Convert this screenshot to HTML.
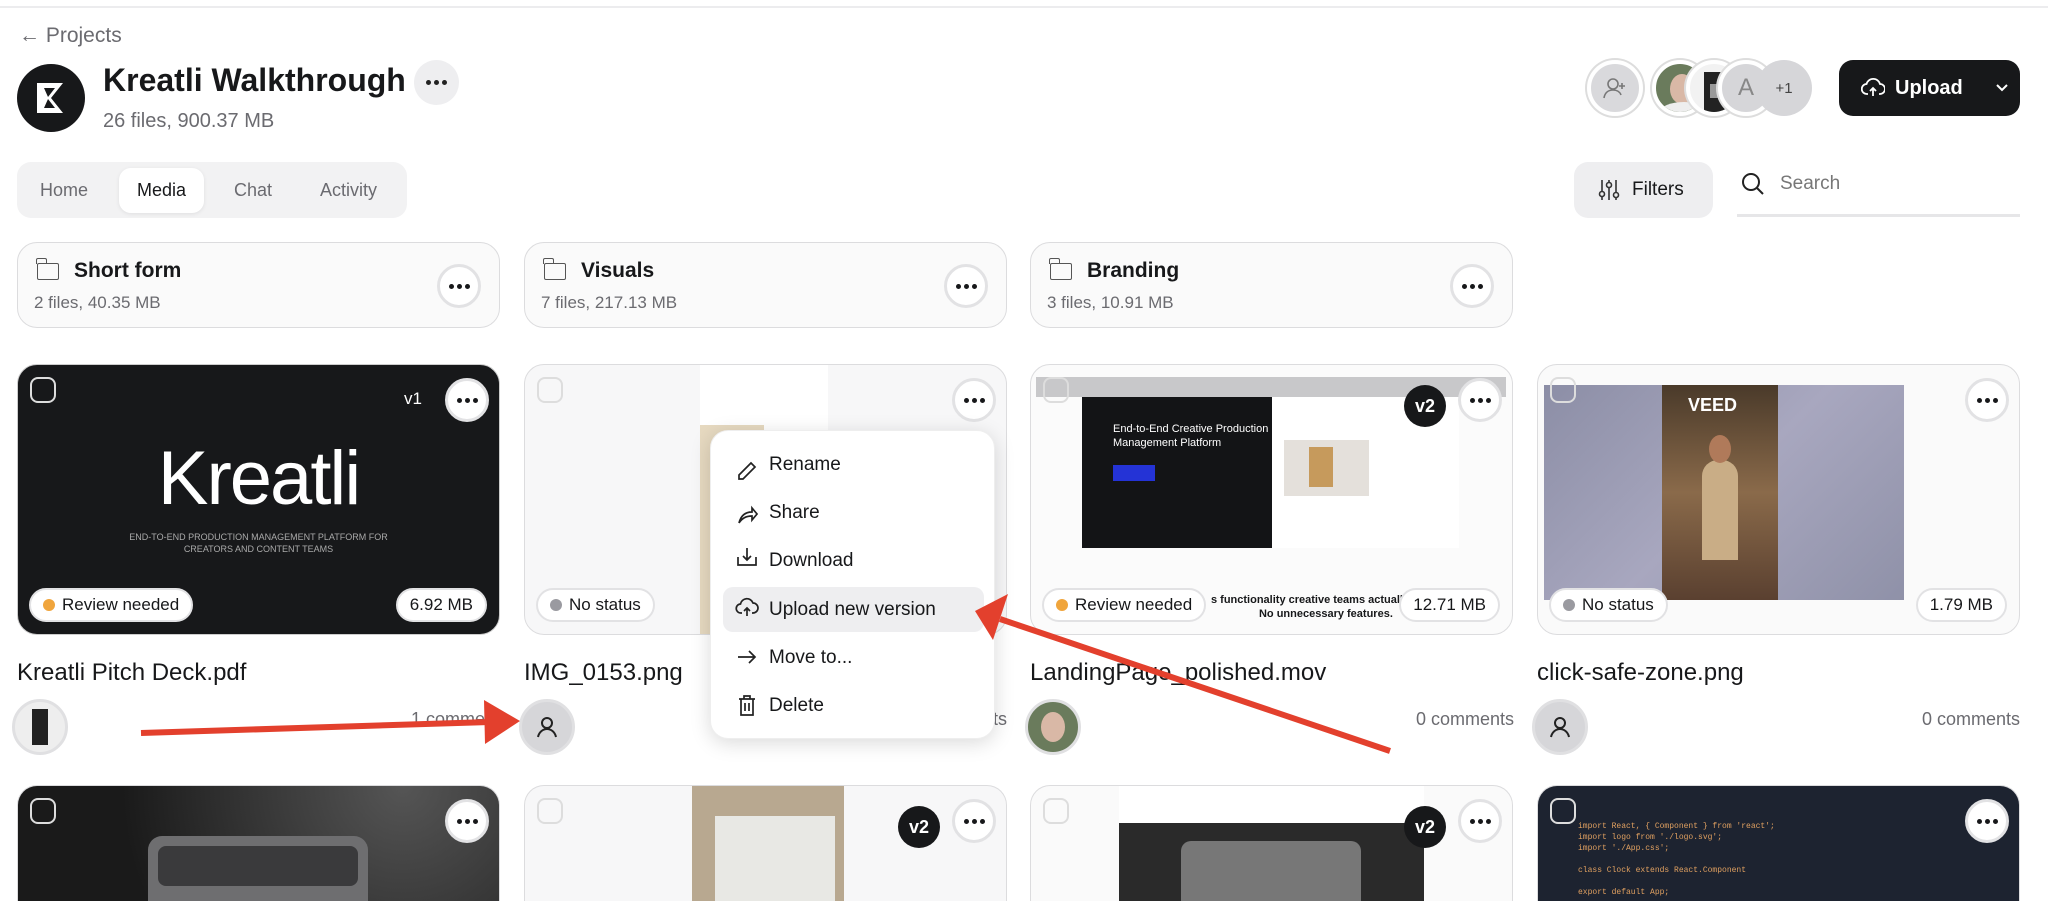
<!DOCTYPE html>
<html><head><meta charset="utf-8"><style>
*{box-sizing:border-box;margin:0;padding:0}
html{width:2048px;height:901px;overflow:hidden}
body{width:2048px;height:901px;overflow:hidden;background:#fff;font-family:"Liberation Sans",sans-serif;color:#17181a;position:relative}
.a{position:absolute}
.more{position:absolute;width:44px;height:44px;border-radius:50%;background:#fff;border:3px solid #e2e2e4;display:flex;align-items:center;justify-content:center;gap:3px}
.more i{width:5px;height:5px;border-radius:50%;background:#17181a;display:block}
.folder{position:absolute;top:242px;width:483px;height:86px;border:1.5px solid #dcdcde;border-radius:20px;background:#fafafa}
.folder .t{position:absolute;left:56px;top:16px;font-size:21px;font-weight:bold}
.folder .s{position:absolute;left:16px;top:50px;font-size:17px;color:#6b6b70}
.folder .ic{position:absolute;left:19px;top:20px;width:22px;height:17px;border:1.8px solid #555;border-radius:2px}
.folder .ic:before{content:"";position:absolute;left:-2px;top:-6px;width:9px;height:5px;border:1.8px solid #555;border-bottom:none;border-radius:2px 2px 0 0}
.folder .more{right:18px;top:21px}
.card{position:absolute;width:483px;height:271px;border-radius:20px;border:1.5px solid #dcdcde;overflow:hidden;background:#f7f7f8}
.r2{height:116px;border-bottom:none;border-radius:20px 20px 0 0}
.chk{position:absolute;left:12px;top:12px;width:26px;height:26px;border:2.5px solid #ddd;border-radius:8px}
.pill{position:absolute;bottom:12px;height:34px;border-radius:17px;background:#fff;border:2px solid #e2e2e4;font-size:17px;display:flex;align-items:center;padding:0 12px;gap:7px}
.dot{width:12px;height:12px;border-radius:50%}
.fname{position:absolute;top:659px;font-size:24px}
.av{position:absolute;top:699px;width:56px;height:56px;border-radius:50%;border:3px solid #e0e0e2;background:#d6d6d9;display:flex;align-items:center;justify-content:center;overflow:hidden}
.cm{position:absolute;top:709px;font-size:18px;color:#6b6b70;text-align:right;width:200px}
.vb{position:absolute;width:42px;height:42px;border-radius:50%;background:#17181a;color:#fff;font-size:18px;font-weight:bold;display:flex;align-items:center;justify-content:center}
.mi{position:absolute;left:0;height:46px;width:100%;display:flex;align-items:center;font-size:19px;padding-left:58px}
</style></head><body>
<div class="a" style="left:0;top:6px;width:2048px;height:2px;background:#ececee"></div>
<div class="a" style="left:19px;top:24px;font-size:21px;color:#6b6b70">← Projects</div>
<div class="a" style="left:17px;top:64px;width:68px;height:68px;border-radius:50%;background:#17181a">
<svg width="68" height="68" viewBox="0 0 68 68"><path d="M20 19 L46 19 L34 34 L46 49 L20 49 Z" fill="#fff"/><path d="M27 24 L38 24 L31 33 Z M27 44 L38 44 L31 35 Z" fill="#17181a"/></svg></div>
<div class="a" style="left:103px;top:62px;font-size:32px;font-weight:bold">Kreatli Walkthrough</div>
<div class="a" style="left:414px;top:60px;width:45px;height:45px;border-radius:50%;background:#eeeef0;display:flex;align-items:center;justify-content:center;gap:3px"><i style="width:5px;height:5px;border-radius:50%;background:#222;display:block"></i><i style="width:5px;height:5px;border-radius:50%;background:#222;display:block"></i><i style="width:5px;height:5px;border-radius:50%;background:#222;display:block"></i></div>
<div class="a" style="left:103px;top:110px;font-size:20px;color:#6b6b70">26 files, 900.37 MB</div>

<div class="a" style="left:17px;top:162px;width:390px;height:56px;border-radius:14px;background:#f2f2f3"></div>
<div class="a" style="left:119px;top:168px;width:85px;height:45px;border-radius:12px;background:#fff;box-shadow:0 1px 4px rgba(0,0,0,.08)"></div>
<div class="a" style="left:40px;top:180px;font-size:18px;color:#6b6b70">Home</div>
<div class="a" style="left:137px;top:180px;font-size:18px;color:#17181a">Media</div>
<div class="a" style="left:234px;top:180px;font-size:18px;color:#6b6b70">Chat</div>
<div class="a" style="left:320px;top:180px;font-size:18px;color:#6b6b70">Activity</div>

<div class="a" style="left:1587px;top:60px;width:56px;height:56px;border-radius:50%;background:#d9d9dc;border:4px solid #fff;box-shadow:0 0 0 2px #ddd;display:flex;align-items:center;justify-content:center"><svg width="26" height="26" viewBox="0 0 26 26" fill="none" stroke="#777" stroke-width="1.6"><circle cx="11" cy="9" r="5"/><path d="M2 23c1-6 5-8 9-8s7 2 8 5M20 8v6M17 11h6"/></svg></div>
<div class="a" style="left:1652px;top:60px;width:56px;height:56px;border-radius:50%;background:#6a7b5c;border:4px solid #fff;box-shadow:0 0 0 2px #ddd;overflow:hidden"><div style="position:absolute;left:14px;top:10px;width:24px;height:30px;border-radius:50%;background:#d9b8a6"></div><div style="position:absolute;left:4px;top:38px;width:48px;height:20px;border-radius:50%;background:#eee"></div></div>
<div class="a" style="left:1686px;top:60px;width:56px;height:56px;border-radius:50%;background:#f2f2f2;border:4px solid #fff;box-shadow:0 0 0 2px #ddd;overflow:hidden"><div style="position:absolute;left:14px;top:8px;width:22px;height:40px;background:#222"></div><div style="position:absolute;left:20px;top:20px;width:10px;height:14px;background:#999"></div></div>
<div class="a" style="left:1718px;top:60px;width:56px;height:56px;border-radius:50%;background:#d6d6d9;border:4px solid #fff;box-shadow:0 0 0 2px #ddd;display:flex;align-items:center;justify-content:center;font-size:24px;color:#888">A</div>
<div class="a" style="left:1756px;top:60px;width:56px;height:56px;border-radius:50%;background:#d6d6d9;display:flex;align-items:center;justify-content:center;font-size:15px;color:#444">+1</div>
<div class="a" style="left:1839px;top:60px;width:181px;height:56px;border-radius:14px;background:#17181a;color:#fff;font-size:20px;font-weight:bold;display:flex;align-items:center;padding-left:22px;gap:10px">
<svg width="24" height="22" viewBox="0 0 24 22" fill="none" stroke="#fff" stroke-width="1.8"><path d="M7 17H6a5 5 0 0 1-.5-10A7 7 0 0 1 19 7a4.5 4.5 0 0 1 0 10h-1"/><path d="M12 19v-8M9 14l3-3 3 3"/></svg>Upload<svg style="margin-left:22px" width="14" height="10" viewBox="0 0 14 10" fill="none" stroke="#fff" stroke-width="2"><path d="M2 2l5 5 5-5"/></svg></div>

<div class="a" style="left:1574px;top:162px;width:139px;height:56px;border-radius:14px;background:#eeeef0;display:flex;align-items:center;padding-left:24px;gap:12px;font-size:19px">
<svg width="22" height="24" viewBox="0 0 22 24" fill="none" stroke="#333" stroke-width="1.6"><path d="M4 2v20M11 2v20M18 2v20"/><circle cx="4" cy="16" r="2.5" fill="#eee"/><circle cx="11" cy="7" r="2.5" fill="#eee"/><circle cx="18" cy="17" r="2.5" fill="#eee"/></svg>Filters</div>
<svg class="a" style="left:1740px;top:171px" width="26" height="26" viewBox="0 0 26 26" fill="none" stroke="#222" stroke-width="2"><circle cx="11" cy="11" r="8"/><path d="M17 17l6 6"/></svg>
<div class="a" style="left:1780px;top:173px;font-size:19px;color:#777">Search</div>
<div class="a" style="left:1737px;top:214px;width:283px;height:3px;background:#e6e6e8"></div>

<div class="folder" style="left:17px"><div class="ic"></div><div class="t">Short form</div><div class="s">2 files, 40.35 MB</div><div class="more"><i></i><i></i><i></i></div></div>
<div class="folder" style="left:524px"><div class="ic"></div><div class="t">Visuals</div><div class="s">7 files, 217.13 MB</div><div class="more"><i></i><i></i><i></i></div></div>
<div class="folder" style="left:1030px"><div class="ic"></div><div class="t">Branding</div><div class="s">3 files, 10.91 MB</div><div class="more"><i></i><i></i><i></i></div></div>

<div class="card" style="left:17px;top:364px;background:#17181a;border-color:#ccc">
<div class="a" style="left:0;width:100%;top:70px;text-align:center;color:#fff;font-size:76px;letter-spacing:-2px">Kreatli</div>
<div class="a" style="left:0;width:100%;top:166px;text-align:center;color:#aaa;font-size:9px;line-height:12px">END-TO-END PRODUCTION MANAGEMENT PLATFORM FOR<br>CREATORS AND CONTENT TEAMS</div>
<div class="chk"></div><div class="a" style="left:386px;top:24px;color:#fff;font-size:17px">v1</div>
<div class="more" style="left:427px;top:13px"><i></i><i></i><i></i></div>
<div class="pill" style="left:11px"><span class="dot" style="background:#f0a53c"></span>Review needed</div>
<div class="pill" style="right:12px">6.92 MB</div></div>
<div class="card" style="left:524px;top:364px">
<div class="a" style="left:175px;top:0;width:128px;height:271px;background:#fff"></div>
<div class="a" style="left:175px;top:60px;width:64px;height:210px;background:#e6d9c0"></div>
<div class="chk"></div><div class="more" style="left:427px;top:13px"><i></i><i></i><i></i></div>
<div class="pill" style="left:11px"><span class="dot" style="background:#9a9aa0"></span>No status</div></div>
<div class="card" style="left:1030px;top:364px;background:#fbfbfb">
<div class="a" style="left:5px;top:12px;width:470px;height:20px;background:#c8c8ca"></div>
<div class="a" style="left:51px;top:32px;width:190px;height:151px;background:#131416"></div>
<div class="a" style="left:82px;top:57px;color:#fff;font-size:11px;line-height:14px">End-to-End Creative Production<br>Management Platform</div>
<div class="a" style="left:82px;top:100px;width:42px;height:16px;background:#2433d6"></div>
<div class="a" style="left:241px;top:32px;width:187px;height:151px;background:#fff"></div>
<div class="a" style="left:253px;top:75px;width:85px;height:56px;background:#e4e0db"></div>
<div class="a" style="left:278px;top:82px;width:24px;height:40px;background:#c69a5c"></div>
<div class="chk"></div>
<div class="vb" style="left:373px;top:20px">v2</div>
<div class="more" style="left:427px;top:13px"><i></i><i></i><i></i></div>
<div class="a" style="left:180px;top:228px;font-size:11px;font-weight:bold;text-align:center;line-height:14px">s functionality creative teams actually need.<br>No unnecessary features.</div>
<div class="pill" style="left:11px"><span class="dot" style="background:#f0a53c"></span>Review needed</div>
<div class="pill" style="right:12px">12.71 MB</div></div>
<div class="card" style="left:1537px;top:364px;background:#fafafa">
<div class="a" style="left:6px;top:20px;width:360px;height:215px;background:linear-gradient(135deg,#8c8ea6,#a8a7bf 50%,#8f91a8)"></div>
<div class="a" style="left:124px;top:20px;width:116px;height:215px;background:linear-gradient(#4a3a2a,#8a6a4a 50%,#5a4030)"></div>
<div class="a" style="left:150px;top:30px;color:#fff;font-weight:bold;font-size:18px">VEED</div>
<div class="a" style="left:164px;top:95px;width:36px;height:100px;background:#c9ad86;border-radius:16px 16px 0 0"></div>
<div class="a" style="left:171px;top:70px;width:22px;height:28px;background:#b07a5a;border-radius:50%"></div>
<div class="chk"></div>
<div class="more" style="left:427px;top:13px"><i></i><i></i><i></i></div>
<div class="pill" style="left:11px"><span class="dot" style="background:#9a9aa0"></span>No status</div>
<div class="pill" style="right:12px">1.79 MB</div></div>

<div class="fname" style="left:17px">Kreatli Pitch Deck.pdf</div>
<div class="fname" style="left:524px">IMG_0153.png</div>
<div class="fname" style="left:1030px">LandingPage_polished.mov</div>
<div class="fname" style="left:1537px">click-safe-zone.png</div>

<div class="av" style="left:12px;background:#eee"><div style="width:16px;height:36px;background:#222"></div></div>
<div class="cm" style="left:300px">1 comment</div>
<div class="av" style="left:519px"><svg width="24" height="24" viewBox="0 0 24 24" fill="none" stroke="#222" stroke-width="2"><circle cx="12" cy="8" r="5"/><path d="M3 22c1-5 5-8 9-8s8 3 9 8"/></svg></div>
<div class="cm" style="left:807px">0 comments</div>
<div class="av" style="left:1025px;background:#6a7b5c"><div style="width:24px;height:30px;border-radius:50%;background:#d9b8a6"></div></div>
<div class="cm" style="left:1314px">0 comments</div>
<div class="av" style="left:1532px"><svg width="24" height="24" viewBox="0 0 24 24" fill="none" stroke="#222" stroke-width="2"><circle cx="12" cy="8" r="5"/><path d="M3 22c1-5 5-8 9-8s8 3 9 8"/></svg></div>
<div class="cm" style="left:1820px">0 comments</div>

<div class="card r2" style="left:17px;top:785px;background:radial-gradient(circle at 80% 0,#555,#1a1a1a 70%)">
<div class="a" style="left:130px;top:50px;width:220px;height:70px;border-radius:14px 14px 0 0;background:#6e6e70"></div>
<div class="a" style="left:140px;top:60px;width:200px;height:40px;border-radius:8px;background:#3a3a3c"></div>
<div class="chk"></div><div class="more" style="left:427px;top:13px"><i></i><i></i><i></i></div></div>
<div class="card r2" style="left:524px;top:785px">
<div class="a" style="left:167px;top:0;width:152px;height:120px;background:#b8a890"></div>
<div class="a" style="left:190px;top:30px;width:120px;height:90px;background:#e8e8e4"></div>
<div class="chk"></div><div class="vb" style="left:373px;top:20px">v2</div><div class="more" style="left:427px;top:13px"><i></i><i></i><i></i></div></div>
<div class="card r2" style="left:1030px;top:785px;background:#fafafa">
<div class="a" style="left:88px;top:0;width:305px;height:120px;background:#fff"></div>
<div class="a" style="left:88px;top:37px;width:305px;height:90px;background:#2a2a2a"></div>
<div class="a" style="left:150px;top:55px;width:180px;height:70px;border-radius:10px;background:#777"></div>
<div class="chk"></div><div class="vb" style="left:373px;top:20px">v2</div><div class="more" style="left:427px;top:13px"><i></i><i></i><i></i></div></div>
<div class="card r2" style="left:1537px;top:785px;background:#1d2330">
<div class="a" style="left:40px;top:35px;color:#e0a060;font-family:'Liberation Mono',monospace;font-size:8px;line-height:11px">import React, { Component } from 'react';<br>import logo from './logo.svg';<br>import './App.css';<br><br>class Clock extends React.Component<br><br>export default App;</div>
<div class="chk"></div><div class="more" style="left:427px;top:13px"><i></i><i></i><i></i></div></div>

<div class="a" style="left:710px;top:430px;width:285px;height:309px;background:#fff;border-radius:18px;box-shadow:0 4px 20px rgba(0,0,0,.15);border:1px solid #eee">
<div class="a" style="left:12px;top:156px;width:261px;height:45px;border-radius:10px;background:#eeeef0"></div>
<div class="mi" style="top:11px">Rename</div>
<div class="mi" style="top:59px">Share</div>
<div class="mi" style="top:107px">Download</div>
<div class="mi" style="top:156px">Upload new version</div>
<div class="mi" style="top:204px">Move to...</div>
<div class="mi" style="top:252px">Delete</div>
<svg class="a" style="left:24px;top:0" width="24" height="309" viewBox="0 0 24 309" fill="none" stroke="#222" stroke-width="1.7">
<path d="M4 44l12-12 4 4-12 12H4z"/>
<path d="M4 92c2-8 7-11 13-11v-4l5 6-5 6v-4c-6 0-10 2-13 7z"/>
<path d="M3 126v8h18v-8M12 117v12M8 125l4 4 4-4"/>
<path d="M7 182H6a4.5 4.5 0 0 1-.5-9A6.5 6.5 0 0 1 18 172a4 4 0 0 1 0 10h-1M12 185v-8M9 180l3-3 3 3"/>
<path d="M3 226h17M14 220l6 6-6 6"/>
<path d="M4 268h16M9 268v-3h6v3M6 268v16h12v-16M10 272v8M14 272v8"/>
</svg></div>

<svg class="a" style="left:0;top:0" width="2048" height="901">
<line x1="141" y1="733" x2="490" y2="722" stroke="#e3402d" stroke-width="6"/>
<polygon points="520,721 484,700 485,744" fill="#e3402d"/>
<line x1="1390" y1="751" x2="1000" y2="619" stroke="#e3402d" stroke-width="6"/>
<polygon points="975,611 1008,594 993,640" fill="#e3402d"/>
</svg>
</body></html>
